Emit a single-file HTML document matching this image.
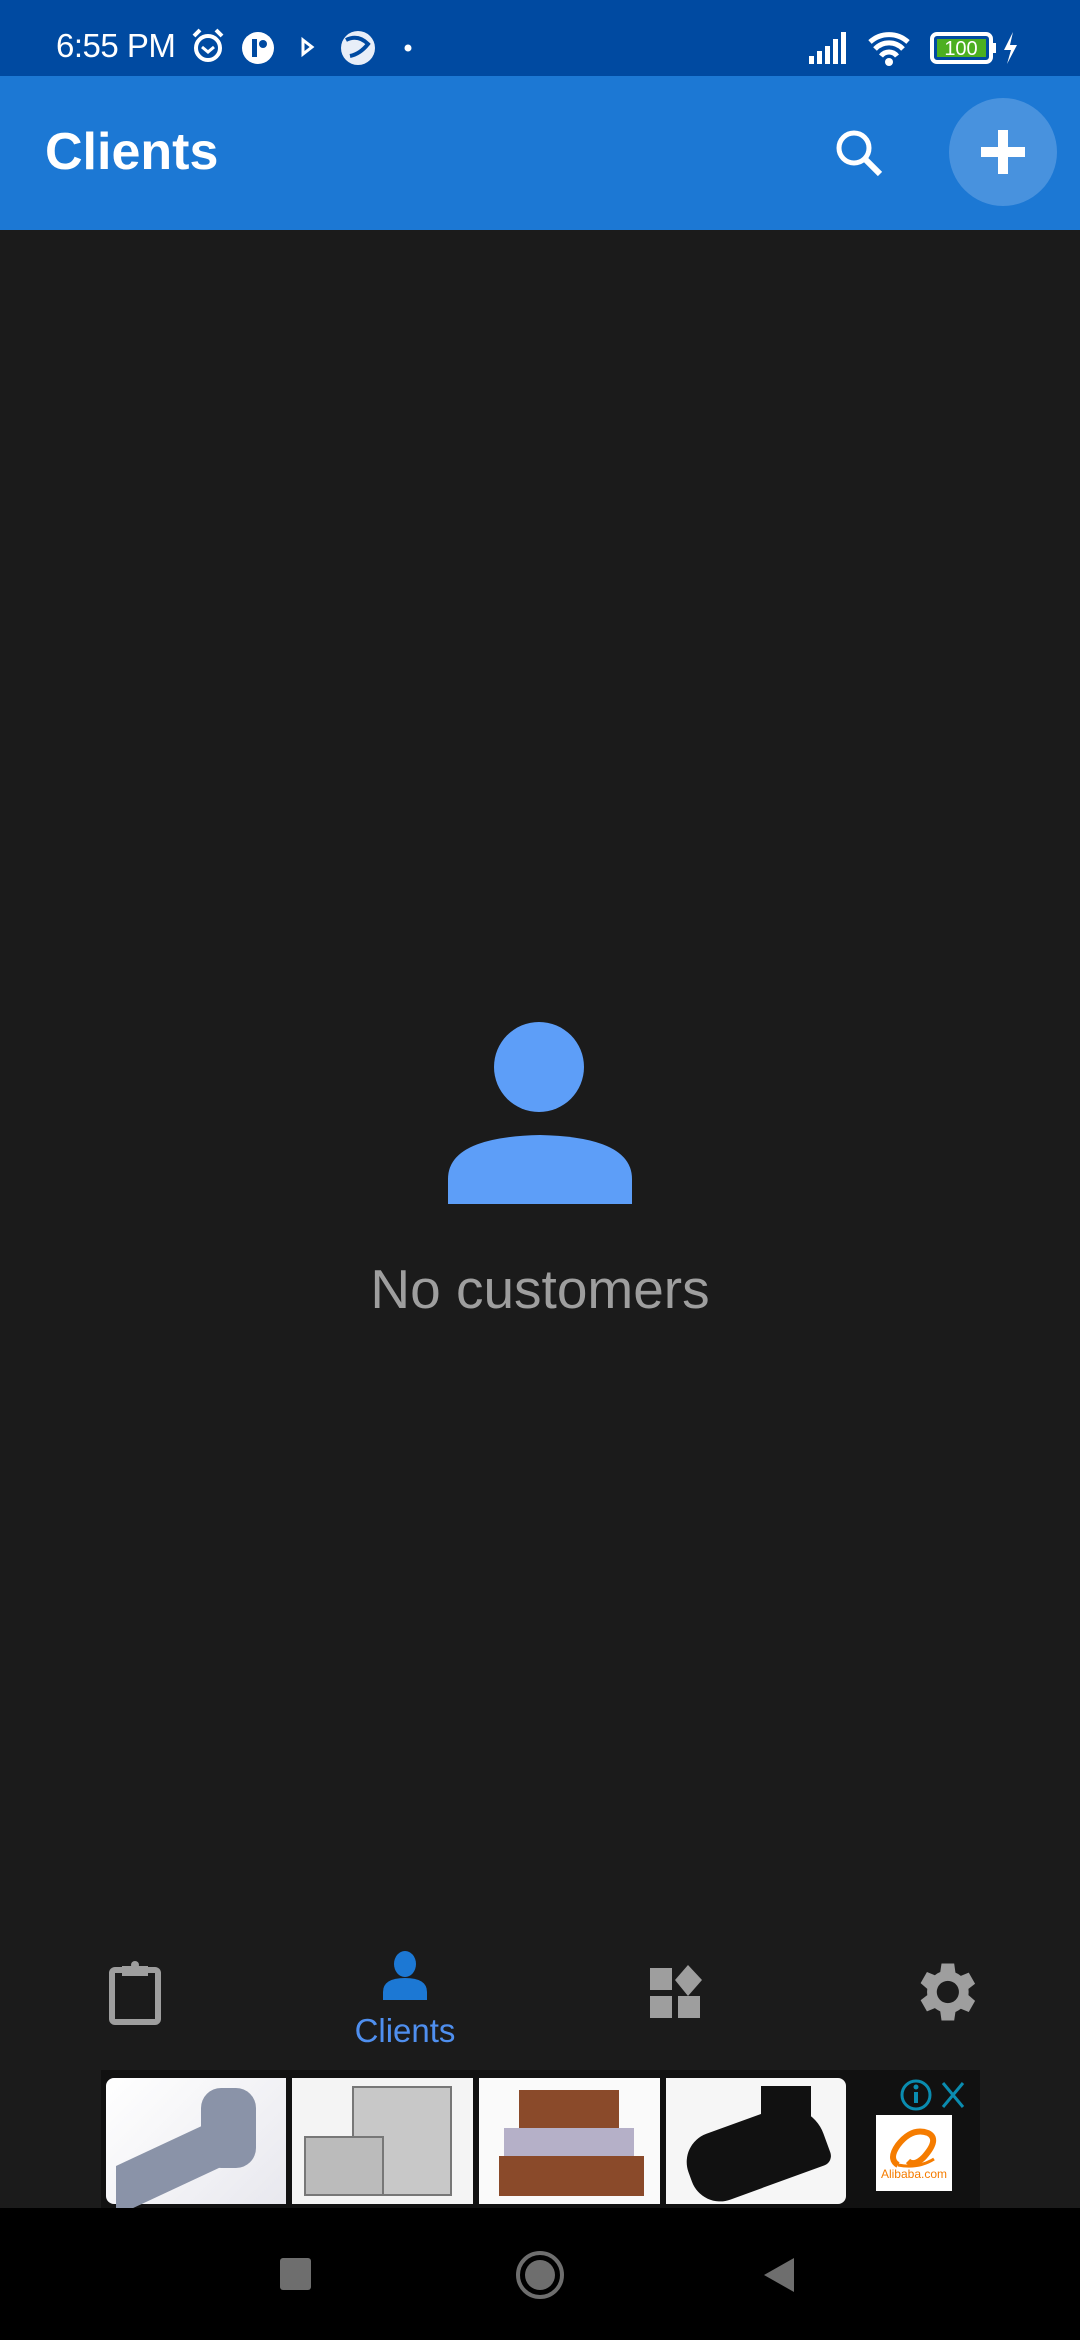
<!DOCTYPE html>
<html><head><meta charset="utf-8"><style>
*{margin:0;padding:0;box-sizing:border-box}
body{width:1080px;height:2340px;background:#1b1b1b;position:relative;overflow:hidden;font-family:"Liberation Sans",sans-serif}
.abs{position:absolute}
</style></head><body>
<div class="abs" style="left:0;top:0;width:1080px;height:76px;background:#004aa1"></div>
<div class="abs" style="left:56px;top:27px;color:#fff;font-size:33px;letter-spacing:-0.5px">6:55 PM</div>
<svg class="abs" style="left:188px;top:26px" width="230" height="40" viewBox="0 0 230 40">
<circle cx="20" cy="22" r="12" fill="none" stroke="#fff" stroke-width="4"/><path d="M14 21l6 5 6-5" stroke="#fff" stroke-width="3" fill="none"/><path d="M6 10l6-6M34 10l-6-6" stroke="#fff" stroke-width="4"/>
<circle cx="70" cy="22" r="16" fill="#fff"/><rect x="64" y="13" width="5" height="18" fill="#004aa1"/><circle cx="75" cy="18" r="4" fill="#004aa1"/>
<path d="M115 14l9 7-9 7z" fill="none" stroke="#fff" stroke-width="3"/>
<circle cx="170" cy="22" r="17" fill="#e8eef8"/><path d="M158 14q12-6 22 4q-8 10-18 12" fill="none" stroke="#004aa1" stroke-width="4"/>
<circle cx="220" cy="22" r="3.5" fill="#fff"/></svg>
<svg class="abs" style="left:806px;top:28px" width="220" height="40" viewBox="0 0 220 40">
<rect x="3" y="28" width="5" height="8" fill="#fff"/><rect x="11" y="23" width="5" height="13" fill="#fff"/><rect x="19" y="18" width="5" height="18" fill="#fff"/><rect x="27" y="11" width="5" height="25" fill="#fff"/><rect x="35" y="4" width="5" height="32" fill="#fff"/>
<path d="M64 14a28 28 0 0 1 38 0M69 21a19 19 0 0 1 28 0M75 28a10 10 0 0 1 16 0" fill="none" stroke="#fff" stroke-width="5"/><circle cx="83" cy="34" r="4" fill="#fff"/>
<rect x="126" y="6" width="59" height="28" rx="5" fill="none" stroke="#fff" stroke-width="4"/><rect x="131" y="11" width="49" height="18" fill="#4caf20"/><text x="155" y="27" fill="#fff" font-size="20" text-anchor="middle" font-family="Liberation Sans">100</text><rect x="187" y="15" width="3" height="10" fill="#fff"/>
<path d="M207 4l-9 18h7l-4 14 10-19h-7z" fill="#fff"/></svg>
<div class="abs" style="left:0;top:76px;width:1080px;height:154px;background:#1c78d4"></div>
<div class="abs" style="left:45px;top:122px;color:#fff;font-size:52px;font-weight:bold">Clients</div>
<svg class="abs" style="left:830px;top:124px" width="60" height="60" viewBox="0 0 60 60"><circle cx="24" cy="24" r="15" fill="none" stroke="#fff" stroke-width="5"/><path d="M35 35l15 15" stroke="#fff" stroke-width="6"/></svg>
<div class="abs" style="left:949px;top:98px;width:108px;height:108px;border-radius:50%;background:#4892de"></div>
<svg class="abs" style="left:973px;top:122px" width="60" height="60" viewBox="0 0 60 60"><path d="M30 8v44M8 30h44" stroke="#fff" stroke-width="10"/></svg>
<svg class="abs" style="left:448px;top:1022px" width="184" height="182" viewBox="0 0 184 182"><circle cx="91" cy="45" r="45" fill="#5d9ef8"/><path d="M0 182v-25q0-42 92-44q92 2 92 44v25z" fill="#5d9ef8"/></svg>
<div class="abs" style="left:0;width:1080px;top:1257px;text-align:center;color:#9e9e9e;font-size:55px">No customers</div>
<svg class="abs" style="left:108px;top:1960px" width="54" height="66" viewBox="0 0 54 66"><rect x="4" y="10" width="46" height="52" rx="3" fill="none" stroke="#9e9e9e" stroke-width="6"/><rect x="14" y="6" width="26" height="10" fill="#9e9e9e"/><circle cx="27" cy="5" r="4" fill="#9e9e9e"/></svg>
<svg class="abs" style="left:380px;top:1950px" width="50" height="50" viewBox="0 0 50 50"><ellipse cx="25" cy="14" rx="11" ry="13" fill="#1c78d4"/><path d="M3 50v-8q0-14 22-14q22 0 22 14v8z" fill="#1c78d4"/></svg>
<div class="abs" style="left:290px;width:230px;top:2012px;text-align:center;color:#4f8fef;font-size:33px">Clients</div>
<svg class="abs" style="left:648px;top:1965px" width="56" height="56" viewBox="0 0 56 56"><rect x="2" y="3" width="22" height="22" fill="#9e9e9e"/><path d="M40 0l14 15-14 16-13-16z" fill="#9e9e9e"/><rect x="2" y="31" width="22" height="22" fill="#9e9e9e"/><rect x="30" y="31" width="22" height="22" fill="#9e9e9e"/></svg>
<svg class="abs" style="left:907px;top:1954px" width="76" height="76" viewBox="0 0 24 24"><path fill="#9e9e9e" d="M19.4 13a7.5 7.5 0 0 0 0-2l2.1-1.6-2-3.5-2.5 1a7 7 0 0 0-1.7-1L14.9 3h-4l-.4 2.7a7 7 0 0 0-1.7 1l-2.5-1-2 3.5L6.4 11a7.5 7.5 0 0 0 0 2l-2.1 1.6 2 3.5 2.5-1a7 7 0 0 0 1.7 1l.4 2.9h4l.4-2.7a7 7 0 0 0 1.7-1l2.5 1 2-3.5zM12.9 15.5a3.5 3.5 0 1 1 0-7 3.5 3.5 0 0 1 0 7z"/></svg>
<div class="abs" style="left:101px;top:2070px;width:879px;height:138px;background:#111"></div>
<div class="abs" style="left:106px;top:2078px;width:180px;height:126px;border-radius:8px 0 0 8px;background:linear-gradient(135deg,#fff,#e8e8ee)"><div style="position:absolute;left:10px;top:60px;width:120px;height:50px;background:#8a93a8;transform:skewY(-25deg)"></div><div style="position:absolute;left:95px;top:10px;width:55px;height:80px;border-radius:20px;background:#8a93a8"></div></div>
<div class="abs" style="left:292px;top:2078px;width:181px;height:126px;background:#f4f4f4"><div style="position:absolute;left:60px;top:8px;width:100px;height:110px;background:#c8c8c8;border:2px solid #777"></div><div style="position:absolute;left:12px;top:58px;width:80px;height:60px;background:#bbb;border:2px solid #777"></div></div>
<div class="abs" style="left:479px;top:2078px;width:181px;height:126px;background:#fafafa"><div style="position:absolute;left:40px;top:12px;width:100px;height:40px;background:#8a4a2a"></div><div style="position:absolute;left:25px;top:50px;width:130px;height:28px;background:#b5b0c8"></div><div style="position:absolute;left:20px;top:78px;width:145px;height:40px;background:#8a4a2a"></div></div>
<div class="abs" style="left:666px;top:2078px;width:180px;height:126px;border-radius:0 8px 8px 0;background:#f6f6f6"><div style="position:absolute;left:20px;top:40px;width:140px;height:70px;border-radius:30px 40px 10px 30px;background:#111;transform:rotate(-20deg)"></div><div style="position:absolute;left:95px;top:8px;width:50px;height:60px;background:#111"></div></div>
<svg class="abs" style="left:896px;top:2078px" width="80" height="34" viewBox="0 0 80 34"><circle cx="20" cy="17" r="14" fill="none" stroke="#0a8cb0" stroke-width="3"/><rect x="18" y="14" width="4" height="11" fill="#0a8cb0"/><circle cx="20" cy="9" r="2.5" fill="#0a8cb0"/><path d="M47 5l20 24M67 5l-20 24" stroke="#0a8cb0" stroke-width="3"/></svg>
<div class="abs" style="left:876px;top:2115px;width:76px;height:76px;background:#fff"><svg width="76" height="76" viewBox="0 0 76 76"><path d="M22 50q-10-6 0-20q14-18 30-12q12 6-4 24q-10 10-16 4" fill="none" stroke="#f57c00" stroke-width="6"/><path d="M22 50q20 4 36-6" stroke="#f57c00" stroke-width="3" fill="none"/><text x="38" y="63" font-size="12" fill="#f57c00" text-anchor="middle" font-family="Liberation Sans">Alibaba.com</text></svg></div>
<div class="abs" style="left:0;top:2208px;width:1080px;height:132px;background:#000"></div>
<div class="abs" style="left:280px;top:2258px;width:31px;height:32px;border-radius:3px;background:#6e6e6e"></div>
<div class="abs" style="left:516px;top:2251px;width:48px;height:48px;border-radius:50%;border:4px solid #6e6e6e"><div style="margin:5px;width:30px;height:30px;border-radius:50%;background:#6e6e6e"></div></div>
<svg class="abs" style="left:762px;top:2256px" width="36" height="38" viewBox="0 0 36 38"><path d="M32 2v34L2 19z" fill="#6e6e6e"/></svg>
</body></html>
